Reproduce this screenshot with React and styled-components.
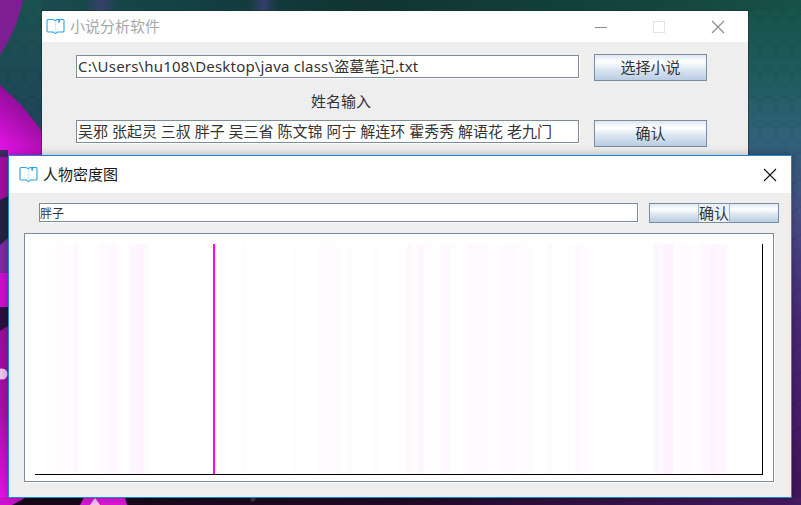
import React from 'react'
import styled, { createGlobalStyle } from 'styled-components'

const GlobalStyle = createGlobalStyle`
  html, body {
    margin: 0;
    padding: 0;
    overflow: hidden;
    background: #1a0a24;
  }
`

const UI_FONT = `"Noto Sans", "Noto Sans CJK SC", sans-serif`

const Desktop = styled.div`
  position: relative;
  width: 801px;
  height: 505px;
  overflow: hidden;
  font-family: ${UI_FONT};
`

const Wallpaper = styled.svg`
  position: absolute;
  inset: 0;
  display: block;
`

const Window = styled.div`
  position: absolute;
  display: flex;
  flex-direction: column;
  box-sizing: border-box;
  background: #eeeeee;
`

const BackWindow = styled(Window)`
  left: 42px;
  top: 11px;
  width: 706px;
  height: 170px;
  box-shadow: 0 0 0 1px rgba(20, 50, 50, 0.55);
`

const FrontWindow = styled(Window)`
  left: 8px;
  top: 155px;
  width: 784px;
  height: 343px;
  border: 1px solid #1b86d2;
  box-shadow: 0 0 9px rgba(0, 0, 0, 0.28);
`

const TitleBar = styled.div`
  display: flex;
  flex: none;
  align-items: center;
  height: ${p => p.$height}px;
  padding-left: ${p => p.$pad}px;
  background: #ffffff;
`

const Title = styled.span`
  margin: -2px 0 0 ${p => p.$gap}px;
  font-size: 15px;
  color: ${p => (p.$dim ? '#a2a8ad' : '#1a1a1a')};
`

const Controls = styled.div`
  display: flex;
  margin-left: auto;
`

const ControlSlot = styled.svg`
  display: block;
  margin-left: ${p => p.$gap}px;
  margin-right: ${p => p.$end}px;
`

const BackBody = styled.div`
  display: flex;
  flex-direction: column;
  padding: 12px 0 0 34px;
`

const Row = styled.div`
  display: flex;
  align-items: flex-start;
`

const Field = styled.div`
  box-sizing: border-box;
  flex: none;
  width: ${p => p.$width}px;
  height: ${p => p.$height}px;
  margin-top: ${p => p.$top || 0}px;
  padding-left: ${p => p.$pad}px;
  padding-top: ${p => p.$drop || 0}px;
  border: 1px solid #7c8c9b;
  background: #ffffff;
  box-shadow: 1px 1px 0 #ffffff;
  font-size: ${p => p.$size}px;
  letter-spacing: ${p => p.$track || 0}px;
  line-height: ${p => p.$height - 2}px;
  color: #333333;
  white-space: nowrap;
  overflow: hidden;
`

const Button = styled.div`
  box-sizing: border-box;
  flex: none;
  display: flex;
  align-items: center;
  justify-content: center;
  width: ${p => p.$width}px;
  height: ${p => p.$height}px;
  margin-left: ${p => p.$gap}px;
  padding-bottom: ${p => p.$lift || 0}px;
  border: 1px solid #7a8da1;
  background: linear-gradient(#dfe8f2 0%, #ffffff 28%, #dbe6f1 58%, #b9cde2 100%);
  font-size: 15px;
  color: #333333;
`

const PaintedLabel = styled.span`
  display: flex;
  align-items: center;
  align-self: stretch;
  padding-bottom: 1px;
  border-left: 1px solid #a6b9cc;
  border-right: 1px solid #a6b9cc;
  background: #eaf0f7;
`

const NameLabel = styled.div`
  width: 530px;
  margin: 9px 0 8px;
  height: 22px;
  line-height: 22px;
  text-align: center;
  font-size: 15px;
  color: #333333;
`

const FrontBody = styled.div`
  display: flex;
  flex-direction: column;
  flex: 1;
  padding: 10px 17px 0 15px;
`

const SearchRow = styled.div`
  display: flex;
  align-items: flex-start;
  padding-left: 15px;
`

const ChartFrame = styled.div`
  box-sizing: border-box;
  width: 750px;
  height: 249px;
  margin-top: 10px;
  border: 1px solid #7c8c9b;
  background: #ffffff;
  box-shadow: 1px 1px 0 #ffffff;
`

const ChartSvg = styled.svg`
  display: block;
`

// x, width, strength of each pale stripe in the density chart
const stripes = [
  [56, 9, 0.35], [68, 2, 0.3], [73, 5, 0.45], [99, 20, 0.4], [109, 6, 0.25],
  [129, 7, 0.6], [136, 8, 0.85], [144, 4, 0.45], [243, 3, 0.3], [294, 2, 0.3],
  [317, 23, 0.3], [348, 4, 0.3], [375, 4, 0.3], [404, 186, 0.1], [407, 6, 0.5],
  [417, 7, 0.65], [429, 2, 0.2], [440, 5, 0.4], [445, 5, 0.5], [468, 12, 0.45],
  [480, 8, 0.35], [500, 3, 0.25], [503, 12, 0.3], [520, 2, 0.3], [526, 4, 0.3],
  [548, 4, 0.45], [575, 4, 0.5], [579, 8, 0.25], [653, 74, 0.18], [654, 5, 0.6],
  [660, 5, 0.5], [665, 8, 0.9], [680, 5, 0.4], [685, 5, 0.25], [700, 10, 0.3],
  [710, 8, 0.7], [718, 9, 0.55],
]

const hexPath = 'M8 0 L16 4.6 V13.8 L8 18.4 L0 13.8 V4.6 Z'

const BookIcon = () => (
  <svg width="19" height="17" viewBox="0 0 19 17" fill="none">
    <path d="M11 1.5 H17 A1 1 0 0 1 18 2.5 V13 A1 1 0 0 1 17 14 H11.5 L9.5 15.6 L7.5 14 H2 A1 1 0 0 1 1 13 V2.5 A1 1 0 0 1 2 1.5 H6 Q8.6 1.5 9.5 3 Q10 1.8 11 1.5 Z" stroke="#2ba3e6" strokeWidth="1.1" />
    <path d="M9.5 3 V14.5" stroke="#d6eaf7" strokeWidth="1.4" />
    <path d="M12.3 1 V5 L13.2 4.2 L14.1 5 V1 Z" fill="#2ba3e6" />
  </svg>
)

const CloseIcon = ({ color, gap, end }) => (
  <ControlSlot $gap={gap} $end={end} width="14" height="14" viewBox="0 0 14 14">
    <path d="M1 1 L13 13 M13 1 L1 13" stroke={color} strokeWidth="1.1" fill="none" />
  </ControlSlot>
)

const Background = () => (
  <Wallpaper width="801" height="505" viewBox="0 0 801 505">
    <defs>
      <linearGradient id="sky" x1="0" y1="0" x2="0" y2="1">
        <stop offset="0" stopColor="#175349" />
        <stop offset="0.14" stopColor="#1e5a5a" />
        <stop offset="0.27" stopColor="#2f6279" />
        <stop offset="0.42" stopColor="#474f88" />
        <stop offset="0.62" stopColor="#4a2a78" />
        <stop offset="0.85" stopColor="#481b68" />
        <stop offset="1" stopColor="#3f1558" />
      </linearGradient>
      <linearGradient id="topband" x1="0" y1="0" x2="1" y2="0">
        <stop offset="0" stopColor="#1b4f52" />
        <stop offset="0.45" stopColor="#0f3433" />
        <stop offset="0.85" stopColor="#15483f" />
        <stop offset="1" stopColor="#175349" />
      </linearGradient>
      <linearGradient id="smudge" x1="0" y1="0" x2="1" y2="0">
        <stop offset="0" stopColor="#3b3f72" stopOpacity="0" />
        <stop offset="0.5" stopColor="#3b3f72" stopOpacity="0.85" />
        <stop offset="1" stopColor="#3b3f72" stopOpacity="0" />
      </linearGradient>
      <linearGradient id="leftsky" x1="0" y1="0" x2="0" y2="1">
        <stop offset="0" stopColor="#1a5350" />
        <stop offset="1" stopColor="#22405c" />
      </linearGradient>
      <linearGradient id="petal" x1="0" y1="1" x2="0.5" y2="0">
        <stop offset="0" stopColor="#f014f0" />
        <stop offset="1" stopColor="#7e0a86" />
      </linearGradient>
      <linearGradient id="lowerpetal" x1="0" y1="0" x2="0" y2="1">
        <stop offset="0" stopColor="#9a0e9c" />
        <stop offset="0.5" stopColor="#a810a8" />
        <stop offset="1" stopColor="#e412e4" />
      </linearGradient>
      <linearGradient id="floor" x1="0" y1="0" x2="1" y2="0">
        <stop offset="0" stopColor="#150818" />
        <stop offset="0.5" stopColor="#1e0b26" />
        <stop offset="1" stopColor="#451a60" />
      </linearGradient>
      <pattern id="hex" width="16" height="27.6" patternUnits="userSpaceOnUse">
        <path d={hexPath} fill="none" stroke="#000000" strokeOpacity="0.05" />
        <path d={hexPath} transform="translate(8 13.8)" fill="none" stroke="#000000" strokeOpacity="0.05" />
        <path d={hexPath} transform="translate(-8 13.8)" fill="none" stroke="#000000" strokeOpacity="0.05" />
      </pattern>
    </defs>
    <rect width="801" height="505" fill="url(#sky)" />
    <rect width="801" height="11" fill="url(#topband)" />
    <rect x="84" width="34" height="11" fill="url(#smudge)" />
    <rect x="248" width="30" height="11" fill="url(#smudge)" />
    <rect x="0" y="0" width="42" height="160" fill="url(#leftsky)" />
    <rect width="801" height="505" fill="url(#hex)" />
    <path d="M0 0 H23 Q17 30 0 55 Z" fill="#7d1f92" />
    <path d="M0 85 L20 104 Q34 120 42 132 V160 H0 Z" fill="url(#petal)" />
    <rect x="0" y="150" width="8" height="8" fill="#3a2a60" />
    <path d="M0 157 H8 V196 L0 200 Z" fill="#a00fa0" />
    <path d="M0 200 L8 196 V273 H0 Z" fill="#252144" />
    <path d="M0 245 L8 238 V273 H0 Z" fill="#7e2aa0" />
    <rect x="0" y="273" width="8" height="34" fill="#cc10cc" />
    <rect x="0" y="307" width="8" height="24" fill="#2a1040" />
    <path d="M0 331 L8 326 V497 H0 Z" fill="url(#lowerpetal)" />
    <circle cx="2" cy="374" r="5.5" fill="#f0c4f0" />
    <rect x="0" y="497" width="801" height="8" fill="url(#floor)" />
    <path d="M0 497 H27 L12 505 H0 Z" fill="#d010d0" />
    <path d="M80 505 L84 497 H125 L127 505 Z" fill="#d818d8" />
    <path d="M90 505 L95 498 L100 505 Z" fill="#f0c8f0" />
    <circle cx="253" cy="499" r="2.5" fill="#463048" />
  </Wallpaper>
)

const DensityChart = () => (
  <ChartSvg width="748" height="247" viewBox="25 234 748 247">
    {stripes.map(([x, w, k]) => (
      <rect key={x} x={x} y="244" width={w} height="230" fill="#ff00ff" opacity={k * 0.05} />
    ))}
    <rect x="213" y="244" width="2" height="230" fill="#ff00ff" />
    <rect x="35" y="474" width="728" height="1" fill="#000000" />
    <rect x="762" y="244" width="1" height="231" fill="#000000" />
  </ChartSvg>
)

export default function App() {
  return (
    <Desktop>
      <GlobalStyle />
      <Background />

      <BackWindow>
        <TitleBar $height={31} $pad={4}>
          <BookIcon />
          <Title $dim $gap={5}>小说分析软件</Title>
          <Controls>
            <ControlSlot $gap={0} $end={0} width="14" height="14" viewBox="0 0 14 14">
              <path d="M1 7.5 H13" stroke="#8f8f8f" strokeWidth="1" fill="none" />
            </ControlSlot>
            <ControlSlot $gap={44} $end={0} width="14" height="14" viewBox="0 0 14 14">
              <rect x="1.5" y="1.5" width="11" height="11" stroke="#e4e4e4" fill="none" />
            </ControlSlot>
            <CloseIcon color="#8a8a8a" gap={45} end={23} />
          </Controls>
        </TitleBar>
        <BackBody>
          <Row>
            <Field $width={503} $height={23} $top={1} $pad={1} $size={15} $track={0.18}>
              C:\Users\hu108\Desktop\java class\盗墓笔记.txt
            </Field>
            <Button $width={113} $height={27} $gap={15} $lift={2}>选择小说</Button>
          </Row>
          <NameLabel>姓名输入</NameLabel>
          <Row>
            <Field $width={503} $height={23} $pad={1} $size={15}>
              吴邪 张起灵 三叔 胖子 吴三省 陈文锦 阿宁 解连环 霍秀秀 解语花 老九门
            </Field>
            <Button $width={113} $height={27} $gap={15} $lift={2}>确认</Button>
          </Row>
        </BackBody>
      </BackWindow>

      <FrontWindow>
        <TitleBar $height={37} $pad={10}>
          <BookIcon />
          <Title $gap={5}>人物密度图</Title>
          <Controls>
            <CloseIcon color="#111111" gap={0} end={14} />
          </Controls>
        </TitleBar>
        <FrontBody>
          <SearchRow>
            <Field $width={599} $height={19} $pad={0} $size={12} $drop={1}>胖子</Field>
            <Button $width={130} $height={20} $gap={11}>
              <PaintedLabel>确认</PaintedLabel>
            </Button>
          </SearchRow>
          <ChartFrame>
            <DensityChart />
          </ChartFrame>
        </FrontBody>
      </FrontWindow>
    </Desktop>
  )
}
